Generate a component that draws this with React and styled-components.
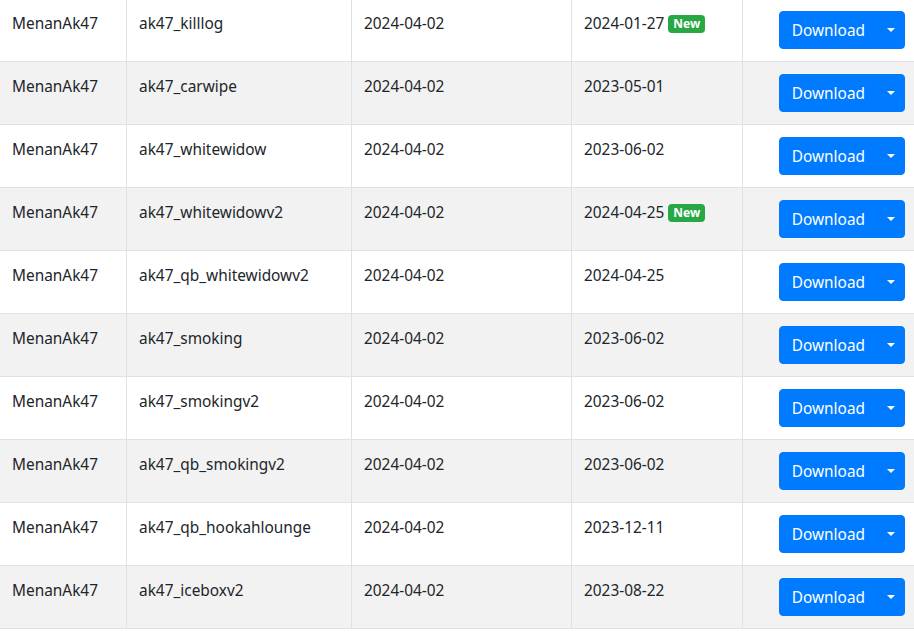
import styled, { createGlobalStyle } from "styled-components";

const GlobalStyle = createGlobalStyle`
    body {
        margin: 0;
        background: #fff;
        overflow: hidden;
        font-family: "Noto Sans", "Open Sans", sans-serif;
        color: #212529;
    }
`

const Table = styled.table`
    border-collapse: collapse;
    table-layout: fixed;
    width: 918px;
    margin: -2px 0 0 -1px;
    font-size: 15.4px;
    line-height: 26px;
`

const Row = styled.tr`
    background: ${props => props.$striped ? "#f2f2f2" : "#fff"};
`

const Cell = styled.td`
    border: 1px solid #dee2e6;
    padding: 12px;
    vertical-align: top;
    white-space: nowrap;
    text-align: ${props => props.$align || "left"};
`

const Badge = styled.span`
    display: inline-block;
    margin-left: 4px;
    padding: 3px 5px;
    font-size: 12px;
    font-weight: 700;
    line-height: 1;
    color: #fff;
    background: #28a745;
    border-radius: 4px;
    vertical-align: 1px;
`

const ButtonGroup = styled.div`
    display: inline-flex;
    vertical-align: top;
`

const Button = styled.button`
    font-family: inherit;
    font-size: 15.4px;
    line-height: 24px;
    color: #fff;
    background: #007bff;
    border: 1px solid #007bff;
    padding: 7px 12px 5px;
    border-radius: 4px 0 0 4px;
    cursor: pointer;
`

const Toggle = styled(Button)`
    display: flex;
    align-items: center;
    padding: 6px 9px;
    margin-left: -1px;
    border-radius: 0 4px 4px 0;

    &::after {
        content: "";
        display: block;
        border-top: 4.5px solid #fff;
        border-left: 4.5px solid transparent;
        border-right: 4.5px solid transparent;
    }
`

const rows = [
    { name: "ak47_killlog", updated: "2024-01-27", isNew: true },
    { name: "ak47_carwipe", updated: "2023-05-01" },
    { name: "ak47_whitewidow", updated: "2023-06-02" },
    { name: "ak47_whitewidowv2", updated: "2024-04-25", isNew: true },
    { name: "ak47_qb_whitewidowv2", updated: "2024-04-25" },
    { name: "ak47_smoking", updated: "2023-06-02" },
    { name: "ak47_smokingv2", updated: "2023-06-02" },
    { name: "ak47_qb_smokingv2", updated: "2023-06-02" },
    { name: "ak47_qb_hookahlounge", updated: "2023-12-11" },
    { name: "ak47_iceboxv2", updated: "2023-08-22" },
]

const App = () => {
    return (
        <>
            <GlobalStyle />
            <Table>
                <colgroup>
                    <col style={{ width: 127 }} />
                    <col style={{ width: 225 }} />
                    <col style={{ width: 220 }} />
                    <col style={{ width: 171 }} />
                    <col style={{ width: 175 }} />
                </colgroup>
                <tbody>
                    {rows.map((row, i) => (
                        <Row key={row.name} $striped={i % 2 === 1}>
                            <Cell>MenanAk47</Cell>
                            <Cell>{row.name}</Cell>
                            <Cell>2024-04-02</Cell>
                            <Cell>
                                {row.updated}
                                {row.isNew && <Badge>New</Badge>}
                            </Cell>
                            <Cell $align="right">
                                <ButtonGroup>
                                    <Button>Download</Button>
                                    <Toggle aria-label="More" />
                                </ButtonGroup>
                            </Cell>
                        </Row>
                    ))}
                </tbody>
            </Table>
        </>
    )
}

export default App;
